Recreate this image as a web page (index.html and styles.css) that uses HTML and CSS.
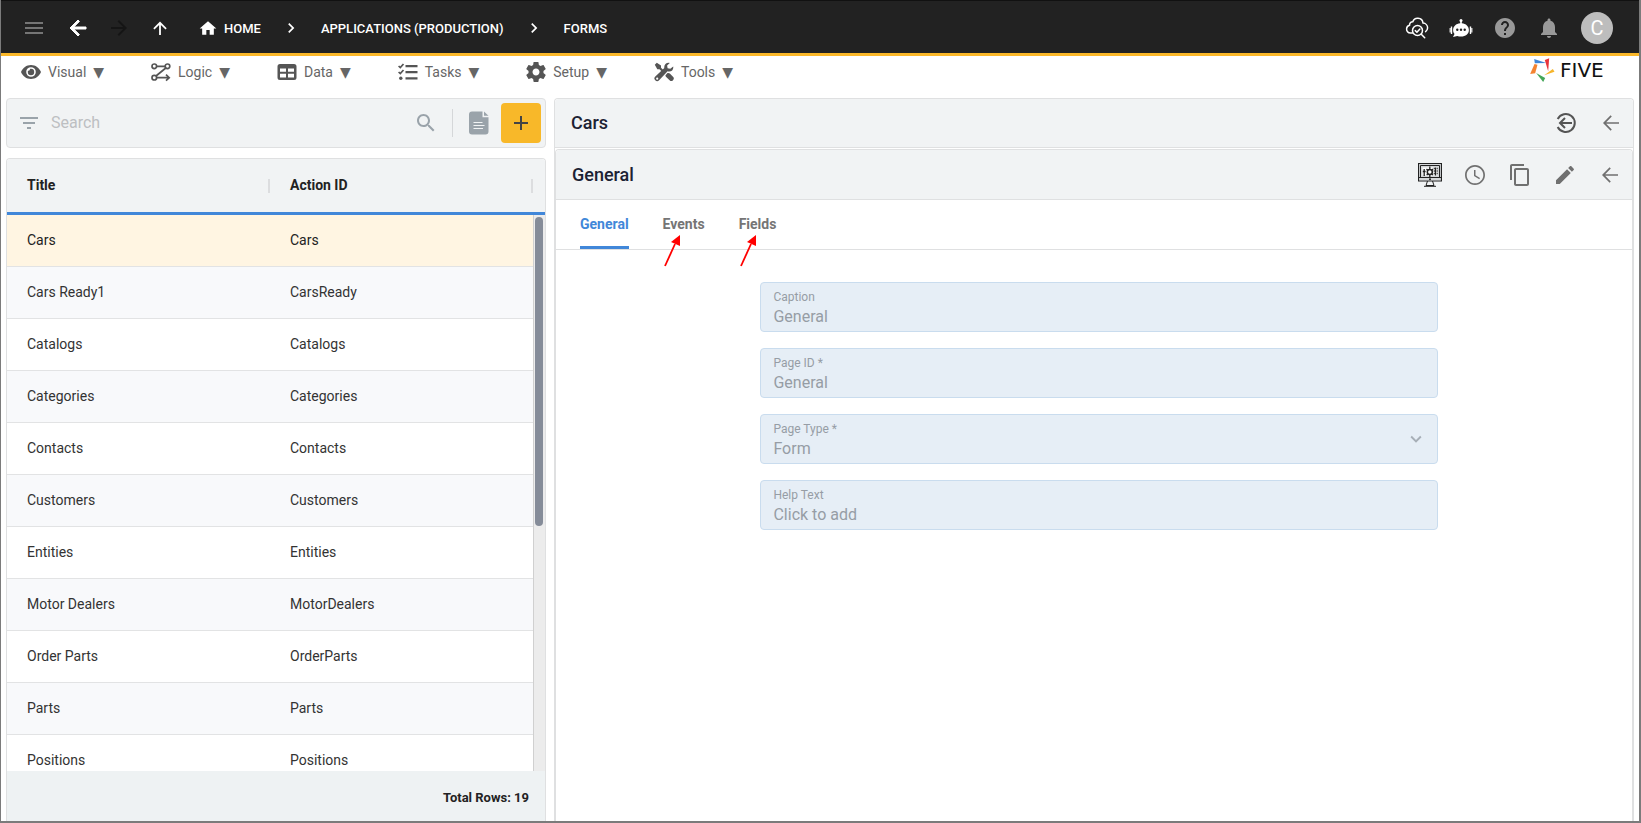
FILE: index.html
```html
<!DOCTYPE html>
<html lang="en">
<head>
<meta charset="utf-8">
<title>Five - Forms</title>
<link rel="stylesheet" href="styles.css">
</head>
<body>
<div class="window">
  <header class="topbar">
    <div class="nav-buttons">
      <button class="icon-btn menu-btn" aria-label="Menu"><svg viewBox="0 0 24 24"><path d="M3 18h18v-2H3v2zm0-5h18v-2H3v2zm0-7v2h18V6H3z"/></svg></button>
      <button class="icon-btn" aria-label="Back"><svg viewBox="0 0 24 24"><path class="heavy" d="M20 11H7.83l5.59-5.59L12 4l-8 8 8 8 1.41-1.41L7.83 13H20v-2z"/></svg></button>
      <button class="icon-btn forward-btn" aria-label="Forward" disabled><svg viewBox="0 0 24 24"><path d="M12 4l-1.41 1.41L16.17 11H4v2h12.17l-5.58 5.59L12 20l8-8z"/></svg></button>
      <button class="icon-btn" aria-label="Up"><svg viewBox="0 0 24 24"><path d="M5.3 12.3l1.2 1.2 4.6-4.6V19h1.8V8.900l4.600 4.600 1.200-1.200L12 5.600z"/></svg></button>
    </div>
    <nav class="crumbs" aria-label="Breadcrumb">
      <a href="#home" class="crumb"><svg viewBox="0 0 24 24"><path d="M10 19v-6h4v6h5v-8h3L12 2 2 11h3v8z" transform="translate(0 2) scale(1 .95)"/></svg>HOME</a>
      <svg class="chevron" viewBox="0 0 24 24"><path d="M10 6L8.590 7.410 13.170 12l-4.580 4.590L10 18l6-6z"/></svg>
      <a href="#applications" class="crumb">APPLICATIONS (PRODUCTION)</a>
      <svg class="chevron" viewBox="0 0 24 24"><path d="M10 6L8.590 7.410 13.170 12l-4.580 4.590L10 18l6-6z"/></svg>
      <a href="#forms" class="crumb">FORMS</a>
    </nav>
    <div class="top-actions">
      <button class="icon-btn" aria-label="Cloud check"><svg viewBox="0 0 24 24"><g fill="none" stroke="currentColor" stroke-width="1.500" stroke-linecap="round" stroke-linejoin="round"><path d="M7.500 17H5.500C3 17 1.300 15 1.600 12.700 1.800 10.900 3 9.600 4.600 9.300 4.300 7.300 5.800 5.600 7.800 5.700 8.600 3.400 10.700 2 13 2.200c2.800.2 4.800 2.300 5 4.900 2.600.2 4.700 2.300 4.600 4.900-.1 1.500-.8 2.800-2 3.600"/><circle cx="12.500" cy="14.500" r="5"/><path d="M10.300 14.600l1.600 1.600 3-3.200M16.300 18.200l3.400 3.600"/></g></svg></button>
      <button class="icon-btn" aria-label="Assistant"><svg viewBox="0 0 24 24"><path d="M11.200 4h1.600v3.200c4.200.3 7.100 3.200 7.100 6.800 0 4-3.200 6.500-7.900 6.500-1.300 0-2.600-.2-3.700-.6L4 21l1.500-3.100C4.500 16.900 4.100 15.600 4.100 14c0-3.600 2.900-6.500 7.100-6.800z"/><path d="M1.800 10.500h1.400v7.500H1.800zM.6 12h1v4.500h-1zM20.800 10.500h1.400v7.500h-1.400zM22.400 12h1v4.500h-1z"/><circle cx="12" cy="4.500" r="1.500"/><g fill="#222"><circle cx="8.300" cy="13.800" r="1.200"/><circle cx="12" cy="13.800" r="1.200"/><circle cx="15.700" cy="13.800" r="1.200"/></g></svg></button>
      <button class="icon-btn muted" aria-label="Help"><svg viewBox="0 0 24 24"><path d="M12 2C6.480 2 2 6.480 2 12s4.480 10 10 10 10-4.480 10-10S17.520 2 12 2zm1 17h-2v-2h2v2zm2.070-7.750l-.9.920C13.450 12.900 13 13.500 13 15h-2v-.5c0-1.100.45-2.100 1.170-2.830l1.240-1.260c.37-.36.59-.86.59-1.410 0-1.100-.9-2-2-2s-2 .9-2 2H8c0-2.210 1.790-4 4-4s4 1.790 4 4c0 .88-.36 1.680-.93 2.250z"/></svg></button>
      <button class="icon-btn muted" aria-label="Notifications"><svg viewBox="0 0 24 24"><path d="M12 22c1.100 0 2-.9 2-2h-4c0 1.100.89 2 2 2zm6-6v-5c0-3.070-1.640-5.640-4.500-6.320V4c0-.83-.67-1.500-1.500-1.500s-1.500.67-1.500 1.500v.68C7.630 5.360 6 7.920 6 11v5l-2 2v1h16v-1l-2-2z"/></svg></button>
      <button class="avatar" aria-label="Account">C</button>
    </div>
  </header>

  <div class="menubar">
    <nav class="menus" aria-label="Main menu">
      <button class="menu"><svg viewBox="0 0 20 20"><path fill-rule="evenodd" d="M10 3C5.500 3 1.700 5.800 0 10c1.700 4.200 5.500 7 10 7s8.300-2.800 10-7c-1.700-4.200-5.500-7-10-7zm0 2.200a4.800 4.800 0 1 1 0 9.600 4.800 4.800 0 0 1 0-9.600z"/><path d="M10 6.800A3.200 3.200 0 1 1 6.800 10c0-.5.1-.9.300-1.300A1.700 1.700 0 0 0 9 7c.3-.1.600-.2 1-.2z"/></svg>Visual <span class="caret">▼</span></button>
      <button class="menu"><svg viewBox="0 0 20 20"><g fill="none" stroke="currentColor" stroke-width="1.700"><circle cx="3.300" cy="4.300" r="2.300"/><circle cx="16.500" cy="4.300" r="2.300"/><circle cx="3.300" cy="15.700" r="2.300"/><path d="M5.600 4.300h8.600M14.800 6L5 14M5.600 15.700h12M15 12.700l3.200 3-3.200 3"/></g></svg>Logic <span class="caret">▼</span></button>
      <button class="menu"><svg viewBox="0 0 20 20"><path fill-rule="evenodd" d="M3 2h14a2.500 2.500 0 0 1 2.500 2.500v11A2.500 2.500 0 0 1 17 18H3a2.500 2.500 0 0 1-2.500-2.500v-11A2.500 2.500 0 0 1 3 2zm0 4.500v3.300h6V6.500zm8 0v3.300h6V6.500zm-8 5.300v3.700h6v-3.700zm8 0v3.700h6v-3.700z"/></svg>Data <span class="caret">▼</span></button>
      <button class="menu"><svg viewBox="0 0 20 20"><path d="M7.500 3h12v2.200h-12zM7.500 9h12v2.200h-12zM7.500 15.200h12v2.200h-12z"/><circle cx="2.800" cy="16.300" r="1.700"/><path fill="none" stroke="currentColor" stroke-width="1.700" d="M.6 4l1.700 1.600 3.200-3.600M.6 10l1.700 1.600 3.200-3.600"/></svg>Tasks <span class="caret">▼</span></button>
      <button class="menu"><svg viewBox="2 2 20 20"><path d="M19.430 12.980c.04-.32.07-.64.07-.98s-.03-.66-.07-.98l2.110-1.650c.19-.15.240-.42.120-.64l-2-3.460c-.12-.22-.39-.3-.61-.22l-2.490 1c-.52-.4-1.080-.73-1.690-.98l-.38-2.650C14.460 2.180 14.250 2 14 2h-4c-.25 0-.46.18-.49.42l-.38 2.650c-.61.25-1.170.59-1.690.98l-2.490-1c-.23-.09-.49 0-.61.22l-2 3.460c-.13.22-.07.49.12.64l2.110 1.650c-.04.32-.07.65-.07.980s.03.66.07.98l-2.110 1.650c-.19.15-.24.42-.12.64l2 3.460c.12.22.39.3.61.22l2.490-1c.52.4 1.080.73 1.690.98l.38 2.650c.03.24.24.42.49.42h4c.25 0 .46-.18.49-.42l.38-2.650c.61-.25 1.170-.59 1.690-.98l2.490 1c.23.09.49 0 .61-.22l2-3.460c.12-.22.07-.49-.12-.64l-2.110-1.650zM12 15.500c-1.930 0-3.500-1.570-3.500-3.500s1.570-3.500 3.500-3.500 3.500 1.570 3.500 3.500-1.570 3.500-3.500 3.500z"/></svg>Setup <span class="caret">▼</span></button>
      <button class="menu"><svg viewBox="0 0 20 20"><path d="M.8 2.800L2.800.8l4.200 2.700v2.200l3.300 3.300-1.500 1.500L5.500 7.200H3.300zM11.500 13.200l2-2.200c1-.3 1.700 0 2.300.6l3.200 3.200a2.300 2.300 0 0 1-3.400 3.400l-3.400-3.200c-.6-.6-.9-1.200-.7-1.800z"/><path fill-rule="evenodd" d="M19.200 4.500c.5 2.600-1.200 5.100-4.100 5.100-.6 0-1.100-.1-1.500-.3l-8.500 9a2.700 2.700 0 0 1-3.800-3.900l9-8.300C9.800 3.200 11.700.6 15 .7l.8.200-2.700 2.700.5 2.700 2.700.5zM3.200 15.600a1.100 1.100 0 1 0 0 2.200 1.100 1.100 0 0 0 0-2.200z"/></svg>Tools <span class="caret">▼</span></button>
    </nav>
    <a class="brand" href="#five" aria-label="Five">
      <svg viewBox="446 173 74 72"><path fill="#3f86d8" d="M458 176l36 12-34 1z"/><path fill="#e8343c" d="M490 179l13-5-3 39z"/><path fill="#f6b52c" d="M488 225l26-19 5 8z"/><path fill="#43a657" d="M464 218l27 15-6 12z"/><path fill="#f48331" d="M459 191l9 2-7 26-15 2z"/></svg>
      <span class="brand-name">FIVE</span>
    </a>
  </div>

  <main class="workspace">
    <section class="list-pane">
      <form class="search-bar">
        <svg class="filter-icon" viewBox="0 0 24 24"><path d="M10 18h4v-2h-4v2zM3 6v2h18V6H3zm3 7h12v-2H6v2z"/></svg>
        <input class="search-input" type="search" placeholder="Search" aria-label="Search">
        <svg class="search-icon" viewBox="0 0 24 24"><path d="M15.500 14h-.79l-.28-.27C15.410 12.590 16 11.110 16 9.500 16 5.910 13.090 3 9.500 3S3 5.910 3 9.500 5.910 16 9.500 16c1.610 0 3.090-.59 4.230-1.570l.27.280v.79l5 4.990L20.490 19l-4.990-5zm-6 0C7.010 14 5 11.990 5 9.500S7.010 5 9.500 5 14 7.010 14 9.500 11.990 14 9.500 14z"/></svg>
        <span class="divider"></span>
        <button class="doc-btn" type="button" aria-label="Report"><svg viewBox="0 0 20 24"><path d="M3 .5h10.500v5.700h6V20.500a3 3 0 0 1-3 3H3a3 3 0 0 1-3-3v-17a3 3 0 0 1 3-3z"/><path d="M15 .5l4.500 4.200H15z"/><path stroke="#f1f3f4" stroke-width="1.200" d="M4.500 11.500h9M4.500 14.500h11M4.500 17.500h9.500"/></svg></button>
        <button class="add-btn" type="button" aria-label="Add"><svg viewBox="0 0 24 24"><path d="M19 13h-6v6h-2v-6H5v-2h6V5h2v6h6v2z"/></svg></button>
      </form>

      <div class="grid">
        <div class="grid-body">
          <table>
            <colgroup><col><col><col class="col-scroll"></colgroup>
            <thead><tr><th scope="col">Title</th><th scope="col">Action ID</th><td></td></tr></thead>
            <tbody>
              <tr class="selected"><td>Cars</td><td>Cars</td><td></td></tr>
              <tr><td>Cars Ready1</td><td>CarsReady</td><td></td></tr>
              <tr><td>Catalogs</td><td>Catalogs</td><td></td></tr>
              <tr><td>Categories</td><td>Categories</td><td></td></tr>
              <tr><td>Contacts</td><td>Contacts</td><td></td></tr>
              <tr><td>Customers</td><td>Customers</td><td></td></tr>
              <tr><td>Entities</td><td>Entities</td><td></td></tr>
              <tr><td>Motor Dealers</td><td>MotorDealers</td><td></td></tr>
              <tr><td>Order Parts</td><td>OrderParts</td><td></td></tr>
              <tr><td>Parts</td><td>Parts</td><td></td></tr>
              <tr><td>Positions</td><td>Positions</td><td></td></tr>
            </tbody>
          </table>
          <div class="scroll-track"><div class="scroll-thumb"></div></div>
        </div>
        <div class="grid-footer">Total Rows: 19</div>
      </div>
    </section>

    <section class="detail-pane">
      <div class="pane-head">
        <h1>Cars</h1>
        <div class="pane-actions">
          <button class="icon-btn dark" aria-label="Exit"><svg viewBox="0 0 24 24"><g fill="none" stroke="currentColor" stroke-width="2"><path d="M3.700 8A9 9 0 1 1 3.700 16"/><path d="M18 12H6M11 7l-5 5 5 5"/></g></svg></button>
          <button class="icon-btn" aria-label="Back"><svg viewBox="0 0 24 24"><path d="M20 11.200H7.200l5.600-5.700L11.600 4.300 4 12l7.600 7.700 1.200-1.200-5.600-5.700H20z"/></svg></button>
        </div>
      </div>
      <div class="card">
        <div class="pane-head card-head">
          <h2>General</h2>
          <div class="pane-actions">
            <button class="icon-btn black" aria-label="Preview"><svg viewBox="0 0 24 24"><path fill="#d4d6d8" d="M1 1h22v16H1z"/><g fill="none" stroke="currentColor"><path d="M.5.5h23v17.500H.5zM.5 14.500h23" stroke-width="1.200"/><path d="M2.500 2.500h19v12h-19zM9.500 18l-1.500 4.500h8L14.500 18M6 23.300h12"/><path fill="#fff" d="M4.500 4.500h15v8h-15z" stroke="none"/><path stroke-width="1.300" d="M6.200 6v7M4.800 8.500h2.800M17.500 4.500v8M15.700 5.500h1M15.700 8h1M15.700 10.500h1M18.700 5.500h1M18.700 8h1M18.700 10.500h1"/><circle cx="11.800" cy="9" r="2.500" stroke-width="1.500"/><path stroke-width="1.300" d="M11.800 3.500v3M11.800 11.500v2.500M8.500 6l1.500 1.500M15 6l-1.500 1.500M8.700 12l1.300-1.300M14.900 12l-1.300-1.300"/></g><circle cx="12" cy="16.200" r="1"/></svg></button>
            <button class="icon-btn" aria-label="History"><svg viewBox="0 0 24 24"><path d="M11.990 2C6.470 2 2 6.480 2 12s4.470 10 9.990 10C17.520 22 22 17.520 22 12S17.520 2 11.990 2zM12 20.300c-4.600 0-8.300-3.700-8.300-8.300S7.400 3.700 12 3.700s8.300 3.700 8.300 8.300-3.700 8.300-8.300 8.300zM12.500 7H11v6l5.250 3.150.75-1.230-4.500-2.670z"/></svg></button>
            <button class="icon-btn" aria-label="Copy"><svg viewBox="0 0 24 24"><path d="M16 1H4c-1.100 0-2 .9-2 2v14h2V3h12V1zm3 4H8c-1.100 0-2 .9-2 2v14c0 1.100.9 2 2 2h11c1.100 0 2-.9 2-2V7c0-1.100-.9-2-2-2zm0 16H8V7h11v14z"/></svg></button>
            <button class="icon-btn" aria-label="Edit"><svg viewBox="0 0 24 24"><path d="M3 17.250V21h3.750L17.810 9.940l-3.750-3.750L3 17.250zM20.710 7.040c.39-.39.39-1.020 0-1.410l-2.340-2.340c-.39-.39-1.020-.39-1.410 0l-1.830 1.830 3.750 3.750 1.830-1.830z"/></svg></button>
            <button class="icon-btn" aria-label="Close page"><svg viewBox="0 0 24 24"><path d="M20 11.200H7.200l5.600-5.700L11.600 4.300 4 12l7.600 7.700 1.200-1.200-5.600-5.700H20z"/></svg></button>
          </div>
        </div>
        <div class="tabs" role="tablist">
          <button class="tab active" role="tab" aria-selected="true">General</button>
          <button class="tab" role="tab">Events<svg class="pointer" viewBox="0 0 18 34"><path stroke="#f00" stroke-width="1.800" d="M2 32L12 10"/><path fill="#f00" d="M17 1v11L8 8z"/></svg></button>
          <button class="tab" role="tab">Fields<svg class="pointer" viewBox="0 0 18 34"><path stroke="#f00" stroke-width="1.800" d="M2 32L12 10"/><path fill="#f00" d="M17 1v11L8 8z"/></svg></button>
        </div>
        <form class="fields">
          <div class="field"><label for="caption">Caption</label><input id="caption" type="text" value="General" disabled></div>
          <div class="field"><label for="page-id">Page ID *</label><input id="page-id" type="text" value="General" disabled></div>
          <div class="field select-field"><label for="page-type">Page Type *</label><select id="page-type" disabled><option>Form</option></select><svg class="select-arrow" viewBox="0 0 24 24"><path d="M7.410 8.590L12 13.170l4.590-4.580L18 10l-6 6-6-6z"/></svg></div>
          <div class="field"><label for="help-text">Help Text</label><input id="help-text" type="text" placeholder="Click to add" disabled></div>
        </form>
      </div>
    </section>
  </main>
</div>
</body>
</html>
```

FILE: styles.css
```css
* { box-sizing: border-box; }

body {
  margin: 0;
  font-family: Roboto, "Liberation Sans", sans-serif;
  font-size: 14px;
  color: #333;
  background: #fff;
}

button, input, select { font: inherit; color: inherit; }
button { padding: 0; border: 0; background: none; cursor: pointer; }
svg { display: block; fill: currentColor; flex: none; }
h1, h2 { margin: 0; font-size: 18px; font-weight: 500; line-height: 24px; color: #1c2233; }

.window {
  display: flex;
  flex-direction: column;
  height: 100vh;
  border: solid #7b7b7b;
  border-width: 0 2px 2px 1px;
  overflow: hidden;
}

.icon-btn { display: block; width: 24px; height: 24px; color: inherit; }
.icon-btn svg { width: 24px; height: 24px; }

/* Top bar */
.topbar {
  display: flex;
  align-items: center;
  flex: none;
  height: 56px;
  padding: 2px 26px 0 21px;
  border-top: 1px solid #111;
  border-bottom: 3px solid #fbb829;
  background: #222;
  color: #fff;
}
.nav-buttons { display: flex; gap: 17px; }
.menu-btn { margin-right: 3px; color: #757575; }
.heavy { stroke: currentColor; stroke-width: 1; }
.forward-btn { color: #151515; }
.crumbs { display: flex; align-items: center; margin-left: 26px; }
.crumb {
  display: flex;
  align-items: center;
  gap: 6px;
  color: #fff;
  font-size: 13px;
  font-weight: 500;
  text-decoration: none;
}
.crumb svg { width: 20px; height: 20px; }
.chevron { width: 20px; height: 20px; margin: 0 20px; }
.top-actions { display: flex; align-items: center; gap: 20px; margin-left: auto; }
.muted { color: #999; }
.avatar {
  width: 32px;
  height: 32px;
  border-radius: 50%;
  background: #bdbdbd;
  color: #fff;
  font-size: 20px;
  line-height: 32px;
}

/* Menu bar */
.menubar {
  display: flex;
  justify-content: space-between;
  align-items: flex-start;
  flex: none;
  height: 42px;
  padding: 0 22px 0 20px;
}
.menus { display: flex; gap: 47px; }
.menu { display: flex; align-items: center; gap: 7px; height: 32px; color: #666; }
.menu svg { width: 20px; height: 20px; color: #555; }
.caret { font-family: "DejaVu Sans", sans-serif; font-size: 14px; line-height: 16px; }
.brand { display: flex; align-items: center; gap: 5px; height: 28px; color: #111; text-decoration: none; }
.brand svg { width: 25px; height: 24px; }
.brand-name { min-width: 57px; font-family: "DejaVu Sans", sans-serif; font-size: 20px; line-height: 24px; }

/* Workspace */
.workspace {
  display: grid;
  grid-template-columns: minmax(0, 1fr) minmax(0, 2fr);
  gap: 8px;
  flex: 1;
  min-height: 0;
  padding: 0 5px;
}
.list-pane { display: flex; flex-direction: column; gap: 10px; min-height: 0; }
.search-bar {
  display: flex;
  align-items: center;
  flex: none;
  height: 50px;
  padding: 0 4px 0 10px;
  border: 1px solid #dfe0e1;
  border-radius: 4px;
  background: #f1f3f4;
  color: #9aa3aa;
}
.filter-icon, .search-icon { width: 24px; height: 24px; }
.search-input {
  flex: 1;
  min-width: 0;
  margin-left: 10px;
  padding: 0 0 2px;
  border: 0;
  outline: 0;
  background: none;
  font-size: 16px;
}
.search-input::placeholder { color: #bdbfc2; opacity: 1; }
.divider { width: 1px; height: 28px; margin: 0 16px 0 14px; background: #d5d7d9; }
.doc-btn svg { width: 20px; height: 24px; }
.add-btn {
  display: grid;
  place-items: center;
  width: 40px;
  height: 40px;
  margin-left: 12px;
  border-radius: 4px;
  background: #f8b829;
  color: #444;
}
.add-btn svg { width: 24px; height: 24px; }

.grid {
  display: flex;
  flex-direction: column;
  flex: 1;
  min-height: 0;
  border: 1px solid #dfe0e1;
  border-bottom: 0;
  border-radius: 4px 4px 0 0;
  overflow: hidden;
}
.grid-body { position: relative; flex: 1; min-height: 0; overflow: hidden; }
table { width: 100%; border-collapse: separate; border-spacing: 0; table-layout: fixed; }
.col-scroll { width: 12px; }
th, td { padding: 0 0 2px 20px; text-align: left; }
thead th, thead td { height: 56px; border-bottom: 3px solid #4187d9; background: #f1f3f4; }
thead th {
  color: #222;
  font-weight: 700;
  background: linear-gradient(#dcdddf, #dcdddf) right center / 2px 14px no-repeat #f1f3f4;
}
tbody td { height: 52px; border-bottom: 1px solid #e2e3e4; }
tbody tr:nth-child(even) { background: #f8f9fb; }
tbody .selected { background: #fff5e2; color: #222; }
.scroll-track {
  position: absolute;
  top: 56px;
  right: 0;
  bottom: 0;
  width: 12px;
  padding: 2px 1px;
  border-left: 1px solid #d0d0d0;
  background: #ececec;
}
.scroll-thumb { width: 8px; height: 56%; border-radius: 4px; background: #858c99; }
.grid-footer {
  flex: none;
  height: 50px;
  padding-right: 16px;
  background: #eef2f3;
  color: #222;
  font-size: 13px;
  font-weight: 700;
  line-height: 54px;
  text-align: right;
}

/* Detail pane */
.detail-pane {
  display: flex;
  flex-direction: column;
  gap: 1px;
  min-height: 0;
  border: 1px solid #dfe0e1;
  border-bottom: 0;
  border-radius: 4px 4px 0 0;
}
.pane-head {
  display: flex;
  align-items: center;
  justify-content: space-between;
  flex: none;
  height: 49px;
  padding: 0 10px 0 16px;
  border-bottom: 1px solid #dfe0e1;
  border-radius: 4px 4px 0 0;
  background: #f1f3f4;
}
.card-head { height: 50px; padding-top: 1px; }
.pane-actions { display: flex; gap: 21px; color: #707070; }
.dark { color: #555; }
.black { color: #222; }
.card {
  display: flex;
  flex-direction: column;
  flex: 1;
  min-height: 0;
  border: 1px solid #dfe0e1;
  border-bottom: 0;
  border-radius: 4px 4px 0 0;
}
.tabs {
  display: flex;
  gap: 34px;
  flex: none;
  height: 50px;
  padding: 0 24px;
  border-bottom: 1px solid #dfe0e1;
}
.tab { position: relative; padding-bottom: 2px; color: #757575; font-weight: 700; border: solid transparent; border-width: 3px 0; }
.tab.active { color: #4187d9; border-bottom-color: #4187d9; }
.pointer { position: absolute; left: 0; top: 31px; width: 18px; height: 34px; }
.fields {
  display: flex;
  flex-direction: column;
  gap: 16px;
  width: 100%;
  padding: 32px 18% 32px 19%;
}
.field {
  position: relative;
  display: flex;
  flex-direction: column;
  gap: 2px;
  padding: 6px 12px 4px;
  border: 1px solid #c9dcee;
  border-radius: 4px;
  background: #e6eef6;
  color: #969da5;
}
.field label { font-size: 12px; line-height: 16px; }
.field input, .field select {
  width: 100%;
  height: 20px;
  padding: 0;
  border: 0;
  background: none;
  color: #969da5;
  font-size: 16px;
  line-height: 20px;
  opacity: 1;
  appearance: none;
}
.field input::placeholder { color: #969da5; opacity: 1; }
.select-arrow { position: absolute; right: 10px; top: 13px; width: 22px; height: 22px; color: #a7afb7; }
```
